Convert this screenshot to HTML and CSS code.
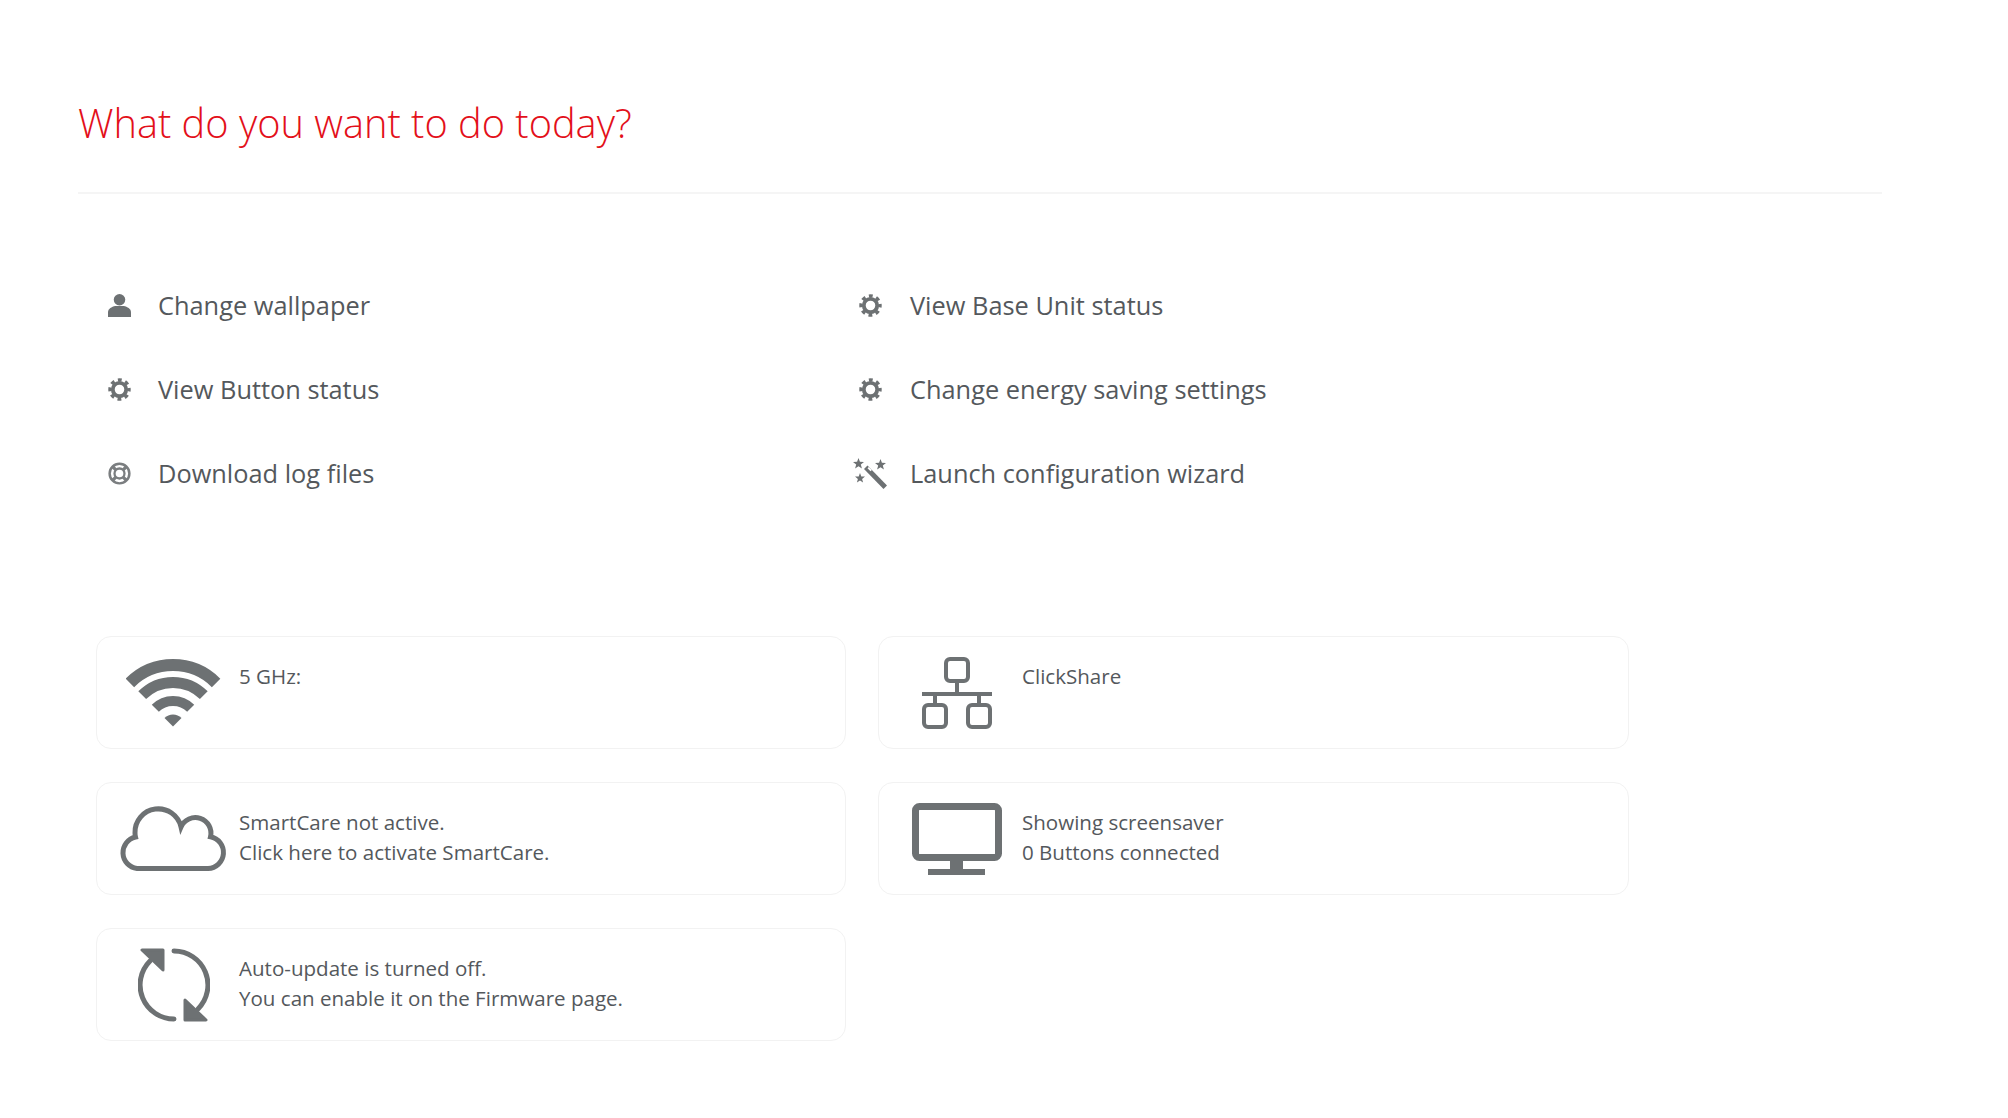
FILE: index.html
```html
<!DOCTYPE html>
<html lang="en">
<head>
<meta charset="utf-8">
<title>What do you want to do today?</title>
<link rel="stylesheet" href="styles.css">
</head>
<body>
<svg class="defs" width="0" height="0" aria-hidden="true">
  <symbol id="gear" viewBox="0 0 24 24">
    <circle cx="12" cy="12" r="7" fill="none" stroke="currentColor" stroke-width="4"/>
    <circle cx="12" cy="12" r="10" fill="none" stroke="currentColor" stroke-width="3.4" stroke-dasharray="4 3.854" stroke-dashoffset="2"/>
  </symbol>
  <symbol id="star" viewBox="0 0 10 10">
    <polygon fill="currentColor" points="5,0 6.3,3.4 10,3.6 7.1,5.9 8.1,9.6 5,7.500 1.900,9.600 2.900,5.900 0,3.600 3.700,3.400"/>
  </symbol>
</svg>
<main class="page">
  <h1 class="title">What do you want to do today?</h1>
  <ul class="actions">
    <li class="action">
      <span class="slot"><svg class="glyph" viewBox="0 0 22 22"><circle cx="11" cy="5.500" r="5.500" fill="currentColor"/><path fill="currentColor" d="M0 22v-4.500C0 14 3.500 12.300 7 11.500h8c3.500.8 7 2.500 7 6V22z"/></svg></span>
      <span>Change wallpaper</span>
    </li>
    <li class="action">
      <span class="slot"><svg class="glyph"><use href="#gear"/></svg></span>
      <span>View Base Unit status</span>
    </li>
    <li class="action">
      <span class="slot"><svg class="glyph"><use href="#gear"/></svg></span>
      <span>View Button status</span>
    </li>
    <li class="action">
      <span class="slot"><svg class="glyph"><use href="#gear"/></svg></span>
      <span>Change energy saving settings</span>
    </li>
    <li class="action">
      <span class="slot"><svg class="glyph" viewBox="0 0 24 24" fill="none" stroke="currentColor" opacity=".9"><circle cx="12" cy="12" r="10.300" stroke-width="2.600"/><circle cx="12" cy="12" r="5.200" stroke-width="2.400"/><path stroke-width="3.400" d="M5 5l3.500 3.500M19 5l-3.500 3.500M5 19l3.500-3.500M19 19l-3.500-3.500"/></svg></span>
      <span>Download log files</span>
    </li>
    <li class="action">
      <span class="slot"><svg class="wand" viewBox="0 0 34 31"><use href="#star" x="0" y="0" width="11" height="11"/><use href="#star" x="22" y="1" width="11" height="11"/><use href="#star" x="2" y="15" width="10" height="10"/><path fill="currentColor" d="M14.500 7.500l19.500 20-3.500 3.500L11 11z"/><path fill="#fff" d="M14.500 10.300l1.400-1.400 3 3-1.400 1.400z"/></svg></span>
      <span>Launch configuration wizard</span>
    </li>
  </ul>
  <section class="cards">
    <div class="card">
      <span class="card-icon"><svg class="ico-wifi" viewBox="0 0 95 68" fill="none" stroke="currentColor"><path stroke-width="12" d="M3.900 23.900A61 61 0 0 1 90.100 23.900"/><path stroke-width="11" d="M16.200 36.200A43.500 43.500 0 0 1 77.800 36.200"/><path stroke-width="10" d="M29.300 49.300A25 25 0 0 1 64.700 49.300"/><path fill="currentColor" stroke="none" d="M47 67.500L38.500 59A12 12 0 0 1 55.500 59z"/></svg></span>
      <p class="card-text">5 GHz:</p>
    </div>
    <div class="card card-right">
      <span class="card-icon"><svg class="ico-net" viewBox="0 0 70 72" fill="none" stroke="currentColor" stroke-width="4"><rect x="24" y="2" width="22" height="22" rx="4"/><rect x="2" y="48" width="22" height="22" rx="4"/><rect x="46" y="48" width="22" height="22" rx="4"/><path d="M0 37h70M35 24v13M13 37v11M57 37v11"/></svg></span>
      <p class="card-text">ClickShare</p>
    </div>
    <div class="card">
      <span class="card-icon"><svg class="ico-cloud" viewBox="0 0 110 66" fill="none" stroke="currentColor" stroke-width="5"><path d="M18 62.500H89A16 16 0 0 0 91.500 30.800A15.600 15.600 0 0 0 62 21A23.300 23.300 0 0 0 16 27Q16 29 16.500 31A16 16 0 0 0 18 62.500Z"/></svg></span>
      <p class="card-text">SmartCare not active.<br>Click here to activate SmartCare.</p>
    </div>
    <div class="card card-right">
      <span class="card-icon"><svg class="ico-mon" viewBox="0 0 90 72" fill="none" stroke="currentColor"><rect x="3.500" y="3.500" width="83" height="51" rx="4" stroke-width="7"/><path fill="currentColor" stroke="none" d="M38 57h13v9h22v6H16v-6h22z"/></svg></span>
      <p class="card-text">Showing screensaver<br>0 Buttons connected</p>
    </div>
    <div class="card">
      <span class="card-icon"><svg class="ico-sync" viewBox="0 0 72 74" fill="none" stroke="currentColor"><path stroke-width="5" stroke-linecap="round" d="M36 3A34 34 0 0 1 60 61M36 71A34 34 0 0 1 12 13"/><path fill="currentColor" stroke-width="3" stroke-linejoin="round" d="M4 2H25V22zM68 72H47V52z"/></svg></span>
      <p class="card-text">Auto-update is turned off.<br>You can enable it on the Firmware page.</p>
    </div>
  </section>
</main>
</body>
</html>
```
FILE: styles.css
```css
* { box-sizing: border-box; }
html, body { margin: 0; padding: 0; background: #fff; }
body {
  font-family: "Open Sans", "Liberation Sans", sans-serif;
  color: #54585c;
}
.defs { position: absolute; }
.page {
  width: 2008px;
  min-height: 1118px;
  padding: 96px 126px 0 78px;
}
.title {
  margin: 0;
  padding-bottom: 26px;
  height: 98px;
  border-bottom: 2px solid #f5f5f5;
  font-size: 39.750px;
  line-height: 54px;
  font-weight: 300;
  color: #e3101a;
}
.actions {
  list-style: none;
  margin: 69px 0 0 18px;
  padding: 0;
  display: grid;
  grid-template-columns: 752px 1fr;
  grid-auto-rows: 84px;
}
.action {
  display: flex;
  align-items: center;
  font-size: 25.360px;
}
.slot {
  flex: none;
  width: 46px;
  margin-right: 16px;
  display: flex;
  justify-content: center;
  color: #6d7173;
}
.action:nth-child(even) .slot {
  margin-left: -1px;
  margin-right: 17px;
}
.glyph { width: 23px; height: 23px; display: block; }
.wand { width: 34px; height: 31px; display: block; }
.cards {
  margin: 121px 0 0 18px;
  display: grid;
  grid-template-columns: 750px 751px;
  grid-auto-rows: 113px;
  gap: 33px 32px;
}
.card {
  display: flex;
  align-items: stretch;
  padding-left: 11px;
  border: 1.500px solid #f2f2f2;
  border-radius: 15px;
}
.card-right { padding-left: 12px; }
.card-icon {
  flex: none;
  width: 131px;
  display: flex;
  align-items: center;
  justify-content: center;
  color: #6d7173;
}
.card-text {
  margin: 0;
  padding-top: 23.500px;
  font-size: 20.550px;
  line-height: 30.700px;
}
.ico-wifi { width: 95px; height: 68px; }
.ico-net { width: 70px; height: 72px; }
.ico-cloud { width: 110px; height: 66px; overflow: visible; }
.ico-mon { width: 90px; height: 72px; }
.ico-sync { width: 72px; height: 74px; }
```
